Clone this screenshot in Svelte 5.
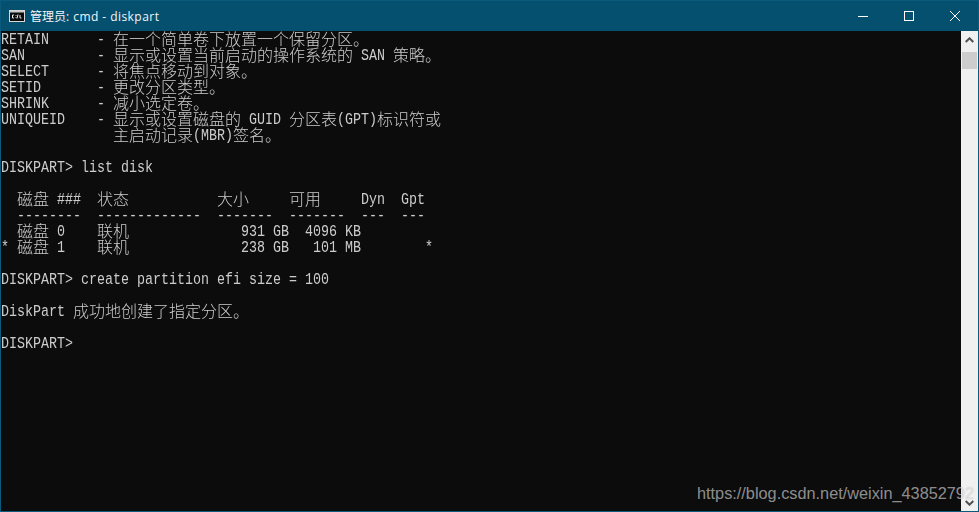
<script>
  const lines = [
    'RETAIN      - 在一个简单卷下放置一个保留分区。',
    'SAN         - 显示或设置当前启动的操作系统的 SAN 策略。',
    'SELECT      - 将焦点移动到对象。',
    'SETID       - 更改分区类型。',
    'SHRINK      - 减小选定卷。',
    'UNIQUEID    - 显示或设置磁盘的 GUID 分区表(GPT)标识符或',
    '              主启动记录(MBR)签名。',
    '',
    'DISKPART> list disk',
    '',
    '  磁盘 ###  状态           大小     可用     Dyn  Gpt',
    '  --------  -------------  -------  -------  ---  ---',
    '  磁盘 0    联机              931 GB  4096 KB',
    '* 磁盘 1    联机              238 GB   101 MB        *',
    '',
    'DISKPART> create partition efi size = 100',
    '',
    'DiskPart 成功地创建了指定分区。',
    '',
    'DISKPART>'
  ];
  const runs = (s) => s.match(/[\u2E80-\uFFFF]+|[^\u2E80-\uFFFF]+/g) ?? [];
  const isCjk = (r) => /[\u2E80-\uFFFF]/.test(r);
</script>

<div class="window">
  <header class="titlebar">
    <svg class="appicon" width="16" height="12" viewBox="0 0 16 12">
      <rect x="0.5" y="0.5" width="15" height="11" fill="#0c0c0c" stroke="#d8d8d8" />
      <rect x="1" y="1" width="14" height="1.5" fill="#c8c8c8" />
      <path d="M5 5H3.5V8H5M7 5v.8M7 7.2V8M9 4.5L8 8.5M11 5v3h1.5" fill="none" stroke="#e8e8e8" />
    </svg>
    <span class="title"><span class="title-cjk">管理员</span><span class="title-latin">: cmd - diskpart</span></span>
    <div class="controls">
      <div class="ctl">
        <svg width="10" height="10" viewBox="0 0 10 10"><path d="M0 5.5H10" stroke="#fff" /></svg>
      </div>
      <div class="ctl">
        <svg width="10" height="10" viewBox="0 0 10 10"><rect x="0.5" y="0.5" width="9" height="9" fill="none" stroke="#fff" /></svg>
      </div>
      <div class="ctl">
        <svg width="10" height="10" viewBox="0 0 10 10"><path d="M0 0L10 10M10 0L0 10" stroke="#fff" /></svg>
      </div>
    </div>
  </header>
  <div class="body">
    <main class="console">
      {#each lines as line}
        <div class="line">{#each runs(line) as r}<span class={isCjk(r) ? 'cjk' : 'mono'}>{r}</span>{/each}</div>
      {/each}
    </main>
    <aside class="scrollbar">
      <div class="arrow">
        <svg width="9" height="6" viewBox="0 0 9 6"><path d="M0.7 5L4.5 1.3L8.3 5" fill="none" stroke="#505050" stroke-width="2" /></svg>
      </div>
      <div class="thumb"></div>
      <div class="track"></div>
      <div class="arrow">
        <svg width="9" height="6" viewBox="0 0 9 6"><path d="M0.7 1L4.5 4.7L8.3 1" fill="none" stroke="#505050" stroke-width="2" /></svg>
      </div>
    </aside>
  </div>
  <div class="watermark">https://blog.csdn.net/weixin_43852792</div>
</div>

<style>
  :global(body) {
    margin: 0;
    background: #0c0c0c;
  }
  .window {
    position: relative;
    width: 979px;
    height: 512px;
    box-sizing: border-box;
    border: 1px solid #0a5a7e;
    display: flex;
    flex-direction: column;
    overflow: hidden;
  }
  .titlebar {
    height: 30px;
    flex: none;
    background: #05506f;
    display: flex;
    align-items: center;
    padding-left: 8px;
    color: #fff;
  }
  .appicon {
    flex: none;
  }
  .title {
    margin: 0 0 1px 5px;
    font: 12px "Open Sans", "Noto Sans CJK SC", sans-serif;
    color: #f2f6f8;
  }
  .title-latin {
    letter-spacing: 0.45px;
  }
  .controls {
    margin-left: auto;
    display: flex;
    height: 100%;
  }
  .ctl {
    width: 46px;
    display: flex;
    align-items: center;
    justify-content: center;
  }
  .body {
    flex: 1;
    display: flex;
    min-height: 0;
    background: #0c0c0c;
  }
  .console {
    flex: 1;
    min-width: 0;
    color: #cccccc;
  }
  .line {
    height: 16px;
    white-space: pre;
    display: flex;
    will-change: transform;
  }
  .mono {
    font: 13.333px/16px "Liberation Mono", monospace;
    white-space: pre;
    transform: translateY(1.5px) scaleY(1.25);
  }
  .cjk {
    font: 300 16px/16px "Noto Sans CJK SC", sans-serif;
    white-space: pre;
    margin-top: -1px;
  }
  .scrollbar {
    width: 17px;
    flex: none;
    background: #f0f0f0;
    display: flex;
    flex-direction: column;
  }
  .arrow {
    height: 17px;
    flex: none;
    display: flex;
    align-items: center;
    justify-content: center;
  }
  .thumb {
    height: 17px;
    flex: none;
    margin: 4px 1px 0;
    background: #cdcdcd;
  }
  .track {
    flex: 1;
  }
  .watermark {
    position: absolute;
    left: 696px;
    top: 482px;
    font: 16.3px/20px "Liberation Sans", sans-serif;
    color: rgba(255, 255, 255, 0.55);
    text-shadow: 0 0 1px rgba(0, 0, 0, 0.25);
    white-space: nowrap;
  }
</style>
